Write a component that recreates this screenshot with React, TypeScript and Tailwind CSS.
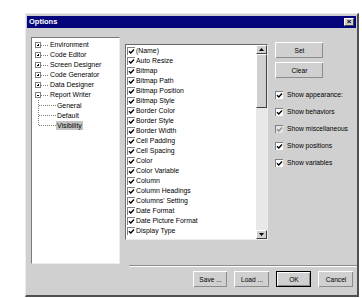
import type { ReactNode } from "react";

const font = { fontFamily: '"Liberation Sans", Arial, sans-serif' };

const props = [
  "(Name)",
  "Auto Resize",
  "Bitmap",
  "Bitmap Path",
  "Bitmap Position",
  "Bitmap Style",
  "Border Color",
  "Border Style",
  "Border Width",
  "Cell Padding",
  "Cell Spacing",
  "Color",
  "Color Variable",
  "Column",
  "Column Headings",
  "Columns' Setting",
  "Date Format",
  "Date Picture Format",
  "Display Type",
];

const roots = ["Environment", "Code Editor", "Screen Designer", "Code Generator", "Data Designer"];

const shows = [
  { label: "Show appearance:", dim: false },
  { label: "Show behaviors", dim: false },
  { label: "Show miscellaneous", dim: true },
  { label: "Show positions", dim: false },
  { label: "Show variables", dim: false },
];

function Tick({ color = "#000" }: { color?: string }) {
  return (
    <svg width="7" height="7" viewBox="0 0 7 7" className="block">
      <path d="M1 3.2 L2.8 5 L6 1.6" fill="none" stroke={color} strokeWidth="1.4" />
    </svg>
  );
}

function Box({ dim = false }: { dim?: boolean }) {
  return (
    <div
      className={`w-[8px] h-[8px] shrink-0 border-t border-l border-[#808080] border-r-white border-b-white flex items-center justify-center ${
        dim ? "bg-[#e4e4e4]" : "bg-white"
      }`}
    >
      <Tick color={dim ? "#8a8a8a" : "#000"} />
    </div>
  );
}

function Btn({ children, w, def = false }: { children: ReactNode; w: string; def?: boolean }) {
  return (
    <div className={`${w} h-[16px] ${def ? "border border-black" : ""}`}>
      <div className="w-full h-full border-t border-l border-white border-r-[#404040] border-b-[#404040] shadow-[inset_-1px_-1px_0_#8c8c8c] flex items-center justify-center text-[6.6px] text-black">
        {children}
      </div>
    </div>
  );
}

function PlusBox({ open = false }: { open?: boolean }) {
  return (
    <div className="w-[6px] h-[6px] border border-[#808080] bg-white relative shrink-0">
      <div className="absolute left-[1px] top-[1.5px] w-[2px] h-px bg-black" />
      {!open && <div className="absolute left-[1.5px] top-[1px] w-px h-[2px] bg-black" />}
    </div>
  );
}

export default function App() {
  return (
    <div className="w-[362px] h-[298px] bg-white pt-[13px] pl-[25px] overflow-hidden" style={font}>
      <div className="w-[334px] h-[284px] bg-[#d0d0d0] border-t border-l border-[#ececec] border-r-2 border-b-2 border-r-[#505050] border-b-[#505050] flex flex-col">
        {/* title bar */}
        <div className="mx-px mt-[2px] h-[12px] bg-[#06067c] flex items-center justify-between pl-[2px] pr-[2px]">
          <span className="text-white font-bold text-[7.5px] leading-none">Options</span>
          <div className="w-[10px] h-[8px] bg-[#d0d0d0] border-t border-l border-white border-r border-b border-r-[#404040] border-b-[#404040] flex items-center justify-center text-[8px] leading-none font-bold">
            ×
          </div>
        </div>

        <div className="flex h-[237px]">
          {/* tree */}
          <div className="ml-[5px] mt-[9px] w-[89px] h-[227px] bg-white border-t border-l border-[#7a7a7a] border-r border-b border-r-[#ececec] border-b-[#ececec] pt-[2px] text-[6.9px] text-black">
            {roots.map((r) => (
              <div key={r} className="h-[10px] flex items-center pl-[3px]">
                <PlusBox />
                <div className="w-[7px] border-t border-dotted border-[#808080]" />
                <span className="ml-[2px] leading-none">{r}</span>
              </div>
            ))}
            <div className="h-[10px] flex items-center pl-[3px]">
              <PlusBox open />
              <div className="w-[7px] border-t border-dotted border-[#808080]" />
              <span className="ml-[2px] leading-none">Report Writer</span>
            </div>
            <div className="ml-[6px] border-l border-dotted border-[#808080] h-[25px] relative">
              {["General", "Default", "Visibility"].map((c, i) => (
                <div key={c} className="h-[10px] flex items-center">
                  <div className="w-[17px] border-t border-dotted border-[#808080]" />
                  <span
                    className={`px-px leading-[9px] ${i === 2 ? "bg-[#c4c4c4]" : ""}`}
                  >
                    {c}
                  </span>
                </div>
              ))}
            </div>
          </div>

          {/* right area */}
          <div className="flex-1 flex flex-col">
            <div className="flex">
              {/* property list */}
              <div className="ml-[5px] mt-[16px] w-[143px] h-[196px] bg-white border-t border-l border-[#6a6a6a] border-r border-b border-r-[#ececec] border-b-[#ececec] flex">
                <div className="flex-1 pl-[1px] pt-[1px]">
                  {props.map((p) => (
                    <div key={p} className="h-[10px] flex items-center text-[6.9px] leading-none text-black">
                      <Box />
                      <span className="ml-[1px] whitespace-nowrap">{p}</span>
                    </div>
                  ))}
                </div>
                <div className="w-[11px] bg-[#e8e8e8] flex flex-col">
                  <div className="h-[9px] bg-[#d0d0d0] border-t border-l border-white border-r border-b border-r-[#404040] border-b-[#404040] flex items-center justify-center">
                    <svg width="5" height="3" viewBox="0 0 5 3"><path d="M0 3 L2.5 0 L5 3Z" fill="#000" /></svg>
                  </div>
                  <div className="h-[54px] bg-[#d0d0d0] border-t border-l border-white border-r border-b border-r-[#404040] border-b-[#404040]" />
                  <div className="flex-1" />
                  <div className="h-[9px] bg-[#d0d0d0] border-t border-l border-white border-r border-b border-r-[#404040] border-b-[#404040] flex items-center justify-center">
                    <svg width="5" height="3" viewBox="0 0 5 3"><path d="M0 0 L2.5 3 L5 0Z" fill="#000" /></svg>
                  </div>
                </div>
              </div>

              {/* right buttons and options */}
              <div className="ml-[7px] mt-[14px] flex flex-col">
                <Btn w="w-[48px]">Set</Btn>
                <div className="mt-[4px]">
                  <Btn w="w-[48px]">Clear</Btn>
                </div>
                <div className="mt-[13px] flex flex-col gap-[9px]">
                  {shows.map((s) => (
                    <div key={s.label} className="h-[8px] flex items-center">
                      <Box dim={s.dim} />
                      <span className="ml-[4px] text-[6.7px] leading-none text-black whitespace-nowrap">{s.label}</span>
                    </div>
                  ))}
                </div>
              </div>
            </div>
          </div>
        </div>

        {/* separator */}
        <div className="ml-[103px] h-[2px] border-t border-[#8a8a8a] border-b border-b-white" />

        {/* footer */}
        <div className="flex justify-end gap-[7px] pr-[4px] mt-[4px]">
          <Btn w="w-[34px]">Save ...</Btn>
          <Btn w="w-[35px]">Load ...</Btn>
          <Btn w="w-[35px]" def>OK</Btn>
          <Btn w="w-[35px]">Cancel</Btn>
        </div>
      </div>
    </div>
  );
}
